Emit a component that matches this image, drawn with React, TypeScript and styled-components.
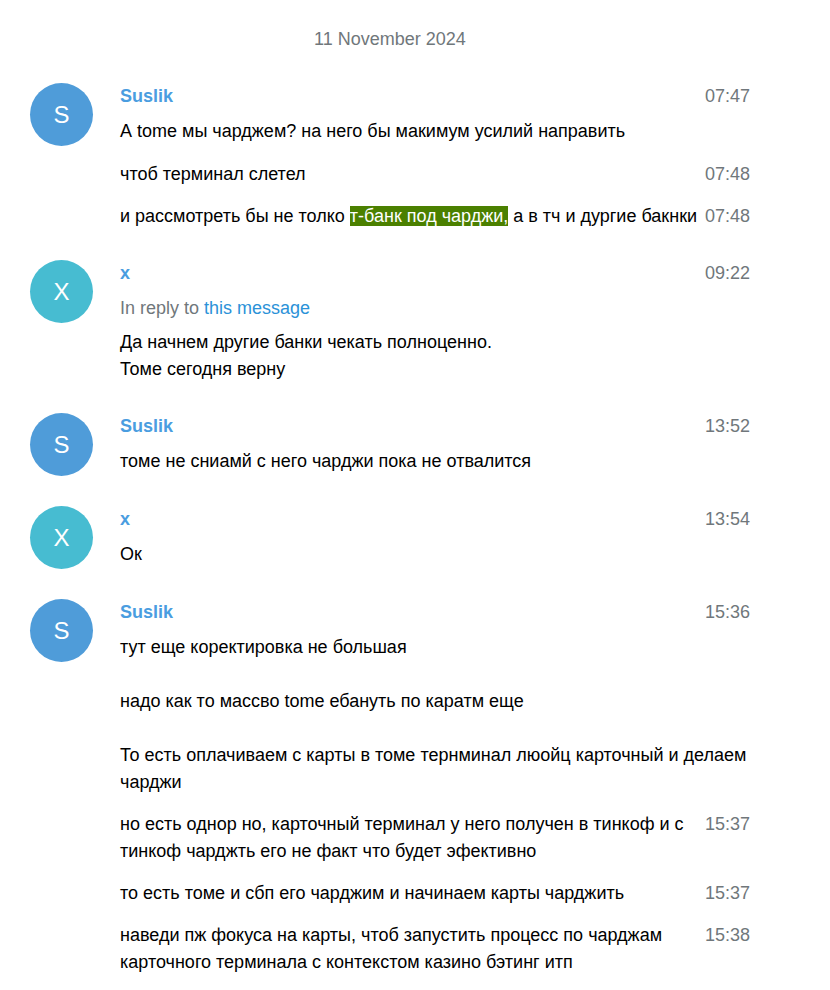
import { FC, Fragment } from "react";
import styled, { createGlobalStyle } from "styled-components";

const GlobalStyle = createGlobalStyle`
    body {
        margin: 0;
        background: #ffffff;
        font: 18px/27px "Liberation Sans", Arial, sans-serif;
        color: #000000;
    }
`;

const History = styled.div`
    width: 720px;
    padding: 11px 0 0 30px;
`;

const Service = styled.div`
    padding: 15px 36px;
    text-align: center;
    color: #70777b;
`;

const Message = styled.div<{ $joined?: boolean }>`
    display: flex;
    gap: 27px;
    padding: ${(p) => (p.$joined ? "0 0 15px" : "15px 0")};
`;

const Avatar = styled.div<{ $color: string }>`
    flex: 0 0 63px;
    width: 63px;
    height: 63px;
    border-radius: 50%;
    background-color: ${(p) => p.$color};
    color: #ffffff;
    font-size: 24px;
    line-height: 63px;
    text-align: center;
`;

const AvatarSpace = styled.div`
    flex: 0 0 63px;
`;

const Body = styled.div`
    flex: 1;
    min-width: 0;
`;

const Time = styled.div`
    float: right;
    margin-left: 5px;
    color: #70777b;
`;

const FromName = styled.div`
    color: #4a9de0;
    font-weight: 700;
    padding-bottom: 7.5px;
`;

const ReplyTo = styled.div`
    color: #70777b;
    padding-bottom: 7.5px;

    a {
        color: #2b92d8;
        text-decoration: none;
    }
`;

const Text = styled.div`
    line-height: 27px;
    word-wrap: break-word;
`;

const Mark = styled.span`
    background-color: #4b8000;
    color: #ffffff;
`;

type Msg = {
    time: string;
    text: React.ReactNode;
};

type Group = {
    name: string;
    initial: string;
    color: string;
    reply?: boolean;
    messages: Msg[];
};

const lines = (s: string) =>
    s.split("\n").map((l, i, arr) => (
        <Fragment key={i}>
            {l}
            {i < arr.length - 1 && <br />}
        </Fragment>
    ));

const groups: Group[] = [
    {
        name: "Suslik",
        initial: "S",
        color: "#4f9cd9",
        messages: [
            { time: "07:47", text: "А tome мы чарджем? на него бы макимум усилий направить" },
            { time: "07:48", text: "чтоб терминал слетел" },
            {
                time: "07:48",
                text: (
                    <>
                        и рассмотреть бы не толко <Mark>т-банк под чарджи,</Mark> а в тч и дургие бакнки
                    </>
                ),
            },
        ],
    },
    {
        name: "x",
        initial: "X",
        color: "#47bcd1",
        reply: true,
        messages: [{ time: "09:22", text: lines("Да начнем другие банки чекать полноценно.\nТоме сегодня верну") }],
    },
    {
        name: "Suslik",
        initial: "S",
        color: "#4f9cd9",
        messages: [{ time: "13:52", text: "томе не сниамй с него чарджи пока не отвалится" }],
    },
    {
        name: "x",
        initial: "X",
        color: "#47bcd1",
        messages: [{ time: "13:54", text: "Ок" }],
    },
    {
        name: "Suslik",
        initial: "S",
        color: "#4f9cd9",
        messages: [
            {
                time: "15:36",
                text: lines(
                    "тут еще коректировка не большая\n\nнадо как то массво tome ебануть по каратм еще\n\nТо есть оплачиваем с карты в томе тернминал люойц карточный и делаем чарджи"
                ),
            },
            { time: "15:37", text: "но есть однор но, карточный терминал у него получен в тинкоф и с тинкоф чарджть его не факт что будет эфективно" },
            { time: "15:37", text: "то есть томе и сбп его чарджим и начинаем карты чарджить" },
            { time: "15:38", text: "наведи пж фокуса на карты, чтоб запустить процесс по чарджам карточного терминала с контекстом казино бэтинг итп" },
        ],
    },
];

const App: FC = () => {
    return (
        <>
            <GlobalStyle />
            <History>
                <Service>11 November 2024</Service>
                {groups.map((g, gi) =>
                    g.messages.map((m, mi) => (
                        <Message key={`${gi}-${mi}`} $joined={mi > 0}>
                            {mi === 0 ? <Avatar $color={g.color}>{g.initial}</Avatar> : <AvatarSpace />}
                            <Body>
                                <Time>{m.time}</Time>
                                {mi === 0 && <FromName>{g.name}</FromName>}
                                {mi === 0 && g.reply && (
                                    <ReplyTo>
                                        In reply to <a href="#">this message</a>
                                    </ReplyTo>
                                )}
                                <Text>{m.text}</Text>
                            </Body>
                        </Message>
                    ))
                )}
            </History>
        </>
    );
};

export default App;
